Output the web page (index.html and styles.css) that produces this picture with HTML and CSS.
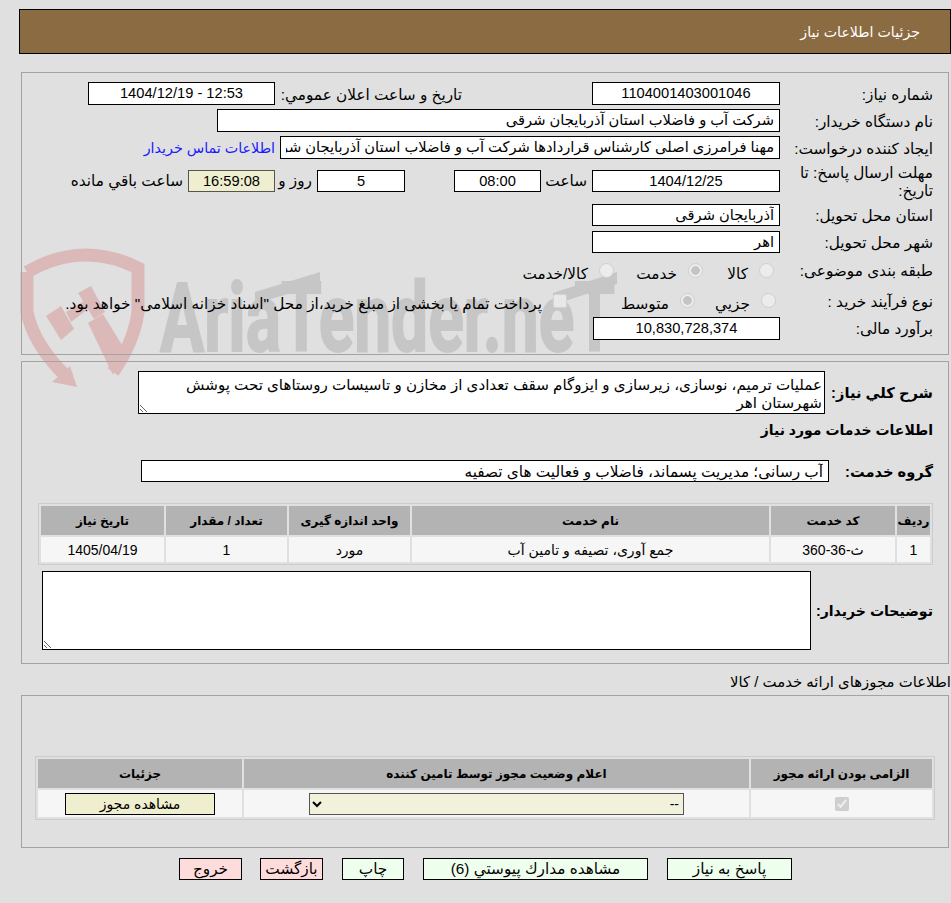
FILE: index.html
```html
<!DOCTYPE html>
<html lang="fa" dir="rtl">
<head>
  <meta charset="UTF-8">
  <title>جزئیات اطلاعات نیاز</title>
  <link rel="stylesheet" href="styles.css">
</head>
<body>
  <svg class="watermark" width="951" height="400" viewBox="0 0 951 400" aria-hidden="true">
    <g fill="none" stroke="#dcb9b9" stroke-width="13">
      <path d="M27 272 Q82 240 138 268 L138 312 Q134 342 113 372"/>
      <path d="M27 272 L27 312 Q34 346 68 378"/>
    </g>
    <g fill="#dcb9b9">
      <polygon points="77,387 52,382 70,366"/>
      <polygon points="46,316 61,306 74,329 61,340"/>
      <polygon points="78,293 91,286 105,312 94,319"/>
      <polygon points="66,312 84,301 88,309 71,322"/>
      <polygon points="88,323 103,314 122,345 113,375"/>
    </g>
    <g fill="#c6c6c6">
      <text x="160" y="351" font-family="Roboto, sans-serif" font-weight="700" font-size="96" textLength="455" lengthAdjust="spacingAndGlyphs" direction="ltr" stroke="#c6c6c6" stroke-width="2">AriaTender.neT</text>
      <polygon points="255,292 320,272 320,284 255,304"/>
      <polygon points="553,293 617,272 617,284 553,305"/>
    </g>
  </svg>

  <div class="page-title">جزئیات اطلاعات نیاز</div>

  <div class="panel panel-need">
    <div class="row row-first">
      <div class="label">شماره نياز:</div>
      <div class="field field-md center">1104001403001046</div>
      <div class="label label-date">تاريخ و ساعت اعلان عمومي:</div>
      <div class="field field-date center">1404/12/19 - 12:53</div>
    </div>
    <div class="row">
      <div class="label">نام دستگاه خريدار:</div>
      <div class="field field-buyer">شرکت آب و فاضلاب استان آذربایجان شرقی</div>
    </div>
    <div class="row">
      <div class="label">ايجاد كننده درخواست:</div>
      <div class="field field-creator">مهنا فرامرزی اصلی کارشناس قراردادها شرکت آب و فاضلاب استان آذربایجان شرقی</div>
      <a class="contact-link" href="#">اطلاعات تماس خريدار</a>
    </div>
    <div class="row row-deadline">
      <div class="label label-wrap">مهلت ارسال پاسخ: تا تاريخ:</div>
      <div class="field field-md center">1404/12/25</div>
      <div class="unit unit-hour">ساعت</div>
      <div class="field field-sm center">08:00</div>
      <div class="field field-days center">5</div>
      <div class="unit unit-day">روز و</div>
      <div class="field field-sm field-timer center">16:59:08</div>
      <div class="unit unit-left">ساعت باقي مانده</div>
    </div>
    <div class="row row-city">
      <div class="label">استان محل تحويل:</div>
      <div class="field field-md">آذربایجان شرقی</div>
    </div>
    <div class="row row-town">
      <div class="label">شهر محل تحويل:</div>
      <div class="field field-md">اهر</div>
    </div>
    <div class="row row-category">
      <div class="label">طبقه بندی موضوعی:</div>
      <div class="choices">
        <input class="radio radio-goods" type="radio" disabled><span class="choice-text text-goods">کالا</span>
        <input class="radio" type="radio" disabled checked><span class="choice-text text-service">خدمت</span>
        <input class="radio" type="radio" disabled><span class="choice-text">کالا/خدمت</span>
      </div>
    </div>
    <div class="row row-process">
      <div class="label">نوع فرآيند خريد :</div>
      <div class="choices">
        <input class="radio radio-minor" type="radio" disabled><span class="choice-text text-minor">جزيي</span>
        <input class="radio" type="radio" disabled checked><span class="choice-text text-medium">متوسط</span>
        <input class="check-faint" type="checkbox" disabled>
        <span class="choice-text">پرداخت تمام يا بخشی از مبلغ خريد،از محل "اسناد خزانه اسلامی" خواهد بود.</span>
      </div>
    </div>
    <div class="row row-budget">
      <div class="label">برآورد مالی:</div>
      <div class="field field-budget center">10,830,728,374</div>
    </div>
  </div>

  <div class="panel panel-service">
    <div class="row row-summary">
      <div class="label-bold label-summary">شرح كلي نياز:</div>
      <textarea class="box box-summary" readonly>عملیات ترمیم، نوسازی، زیرسازی و ایزوگام سقف تعدادی از مخازن و تاسیسات روستاهای تحت پوشش شهرستان اهر</textarea>
    </div>
    <div class="section-title">اطلاعات خدمات مورد نياز</div>
    <div class="row row-group">
      <div class="label-bold label-group">گروه خدمت:</div>
      <div class="field field-group">آب رسانی؛ مدیریت پسماند، فاضلاب و فعالیت های تصفیه</div>
    </div>
    <table class="grid grid-service">
      <tr>
        <th class="col-index">رديف</th>
        <th class="col-code">كد خدمت</th>
        <th class="col-name">نام خدمت</th>
        <th class="col-unit">واحد اندازه گيری</th>
        <th class="col-qty">تعداد / مقدار</th>
        <th class="col-date">تاريخ نياز</th>
      </tr>
      <tr>
        <td>1</td>
        <td>ث-36-360</td>
        <td>جمع آوری، تصیفه و تامین آب</td>
        <td>مورد</td>
        <td>1</td>
        <td>1405/04/19</td>
      </tr>
    </table>
    <div class="row row-notes">
      <div class="label-bold label-notes">توضيحات خريدار:</div>
      <textarea class="box box-notes" readonly></textarea>
    </div>
  </div>

  <div class="license-title">اطلاعات مجوزهای ارائه خدمت / کالا</div>

  <div class="panel panel-license">
    <table class="grid grid-license">
      <tr>
        <th class="col-required">الزامی بودن ارائه مجوز</th>
        <th class="col-status">اعلام وضعیت مجوز توسط تامین کننده</th>
        <th class="col-details">جزئیات</th>
      </tr>
      <tr>
        <td><input class="check-required" type="checkbox" checked disabled></td>
        <td>
          <select class="status-select" disabled>
            <option>--</option>
          </select>
        </td>
        <td><button class="btn btn-license" type="button">مشاهده مجوز</button></td>
      </tr>
    </table>
  </div>

  <div class="actions">
    <button class="btn btn-green btn-reply" type="button">پاسخ به نياز</button>
    <button class="btn btn-green btn-docs" type="button">مشاهده مدارك پيوستي (6)</button>
    <button class="btn btn-green btn-print" type="button">چاپ</button>
    <button class="btn btn-red btn-back" type="button">بازگشت</button>
    <button class="btn btn-red btn-exit" type="button">خروج</button>
  </div>
</body>
</html>
```

FILE: styles.css
```css
* {
  box-sizing: border-box;
}
html, body {
  margin: 0;
  padding: 0;
}
body {
  position: relative;
  height: 903px;
  overflow: hidden;
  padding-top: 9px;
  background: #e0e0e0;
  color: #000;
  font-family: "Liberation Sans", "DejaVu Sans", sans-serif;
  font-size: 15.3px;
}
.watermark {
  position: absolute;
  left: 0;
  top: 0;
  direction: ltr;
}
.page-title {
  position: relative;
  height: 45px;
  margin-left: 19px;
  padding: 14px 30px 0 0;
  background: #8b6b41;
  border: 1px solid #000;
  color: #fff;
  font-size: 14.2px;
}
.panel {
  position: relative;
  margin-left: 21px;
  margin-right: 2px;
  border: 1.5px solid #a3a3a3;
}
.panel-need {
  height: 283px;
  margin-top: 18px;
  padding: 9px 15px 0 0;
}
.panel-service {
  height: 303px;
  margin-top: 6px;
  padding: 9px 15px 0 0;
}
.panel-license {
  height: 153px;
  padding: 60px 13px 0 0;
}
.row {
  display: flex;
  align-items: center;
  height: 23px;
  margin-bottom: 4px;
}
.label {
  flex: none;
  width: 153px;
  padding-top: 2px;
  white-space: nowrap;
}
.label-wrap {
  padding-top: 2px;
  line-height: 18px;
  white-space: normal;
}
.label-date {
  width: 182px;
  margin-right: 130px;
  margin-left: 5px;
}
.label-bold {
  flex: none;
  font-size: 14.67px;
  font-weight: 700;
  white-space: nowrap;
}
.label-summary { width: 108px; }
.label-group { width: 104px; }
.label-notes {
  width: 122px;
  font-size: 14.1px;
}
.field {
  flex: none;
  height: 23px;
  padding: 0 5px;
  overflow: clip;
  overflow-clip-margin: content-box;
  background: #fff;
  border: 1px solid #000;
  font-size: 14.67px;
  line-height: 21px;
  white-space: nowrap;
}
.center {
  text-align: center;
}
.field-md {
  width: 188px;
}
.field-date {
  width: 187px;
  direction: ltr;
}
.field-buyer {
  width: 563px;
}
.field-creator {
  width: 500px;
}
.field-sm {
  width: 87px;
  height: 22px;
}
.field-days {
  width: 88px;
  height: 22px;
  margin-right: 49px;
}
.field-timer {
  background: #efefcf;
  border-color: #555;
}
.field-budget {
  width: 187px;
}
.field-group {
  width: 688px;
  height: 22px;
  font-size: 15.3px;
}
.contact-link {
  margin-right: 5px;
  color: #1a1aff;
  font-size: 14.3px;
  text-decoration: none;
  white-space: nowrap;
}
.unit {
  flex: none;
  white-space: nowrap;
}
.unit-hour {
  width: 51px;
  padding-right: 5px;
}
.unit-day {
  width: 42px;
  padding-right: 5px;
}
.unit-left {
  padding-right: 5px;
}
.row-deadline {
  height: 22px;
  margin-top: 11px;
  margin-bottom: 12px;
}
.row-deadline .field-md,
.row-city .field-md,
.row-town .field-md {
  height: 22px;
}
.row-city {
  height: 22px;
  margin-bottom: 5px;
}
.row-town {
  height: 22px;
  margin-bottom: 6px;
}
.row-category {
  margin-bottom: 7px;
}
.row-category .label {
  padding-top: 0;
}
.row-process {
  margin-bottom: 4px;
}
.row-budget {
  height: 24px;
}
.choices {
  display: flex;
  align-items: center;
  white-space: nowrap;
}
.radio {
  flex: none;
  width: 15px;
  height: 15px;
  margin: 0;
  appearance: none;
  background: #ececec;
  border: 1px solid #cfcfcf;
  border-radius: 50%;
}
.radio:checked {
  background: radial-gradient(circle, #c4c4c4 0 4px, #ececec 4.6px);
}
.radio-goods {
  margin-right: 6px;
}
.radio-minor {
  margin-right: 4px;
}
.choice-text {
  flex: none;
  margin-right: 11px;
  padding-top: 6px;
}
.text-goods {
  width: 45px;
}
.text-service {
  width: 63px;
}
.text-minor {
  width: 55px;
}
.text-medium {
  width: 102px;
}
.check-faint {
  flex: none;
  width: 14px;
  height: 14px;
  margin: 0;
  appearance: none;
  background: #e8e8e8;
  border: 1px solid #d4d4d4;
  border-radius: 2px;
}
.box {
  display: block;
  flex: none;
  padding: 1px 2px;
  background: #fff;
  border: 1px solid #000;
  border-radius: 0;
  color: #000;
  font: inherit;
  line-height: 18px;
  outline: none;
}
.row-summary {
  height: 43px;
  margin-bottom: 0;
}
.box-summary {
  width: 687px;
  height: 43px;
  padding-top: 4px;
  overflow: hidden;
  font-size: 15.1px;
}
.section-title {
  height: 34px;
  margin-top: 6px;
  font-size: 14px;
  font-weight: 700;
  line-height: 21px;
}
.row-group {
  height: 22px;
  margin-top: 6px;
  margin-bottom: 21px;
}
.grid {
  table-layout: fixed;
  border-collapse: separate;
  border-spacing: 2px;
  background: #e0e0e0;
  border: 1px solid #cccccc;
}
.grid th {
  height: 29px;
  padding: 0;
  background: #b3b3b3;
  font-size: 12px;
  font-weight: 700;
}
.grid td {
  height: 25px;
  padding: 0;
  background: #f6f6f6;
  font-size: 14px;
  text-align: center;
}
.grid-service {
  width: 895px;
}
.col-index { width: 33px; }
.col-code { width: 124px; }
.col-name { width: 357px; }
.col-unit { width: 121px; }
.col-qty { width: 121px; }
.col-date { width: 123px; }
.row-notes {
  height: 79px;
  margin-top: 6px;
}
.box-notes {
  width: 769px;
  height: 79px;
}
.license-title {
  height: 31px;
  padding-top: 9px;
  font-size: 14.9px;
  white-space: nowrap;
}
.grid-license {
  width: 900px;
}
.grid-license td {
  height: 27px;
}
.col-required { width: 181px; }
.col-status { width: 505px; }
.col-details { width: 204px; }
.check-required {
  display: block;
  width: 14px;
  height: 14px;
  margin: 0 auto;
}
.status-select {
  display: block;
  width: 375px;
  height: 22px;
  margin: 0 65px 0 0;
  background-color: #f2f2dc;
  border: 1px solid #555;
  border-radius: 0;
  color: #000;
  font: inherit;
  opacity: 1;
}
.btn {
  height: 22px;
  padding: 0;
  border: 1px solid #000;
  border-radius: 0;
  color: #000;
  font: inherit;
}
.btn-license {
  display: block;
  width: 150px;
  margin: 0 auto;
  background: #efefcf;
}
.actions {
  position: relative;
  display: flex;
  margin-top: 10px;
  padding-right: 159px;
}
.btn-green {
  background: #eeffee;
}
.btn-red {
  background: #ffdcdc;
}
.btn-reply { width: 125px; margin-left: 19px; }
.btn-docs { width: 225px; margin-left: 19px; }
.btn-print { width: 62px; margin-left: 19px; }
.btn-back { width: 63px; margin-left: 18px; }
.btn-exit { width: 63px; }
```
